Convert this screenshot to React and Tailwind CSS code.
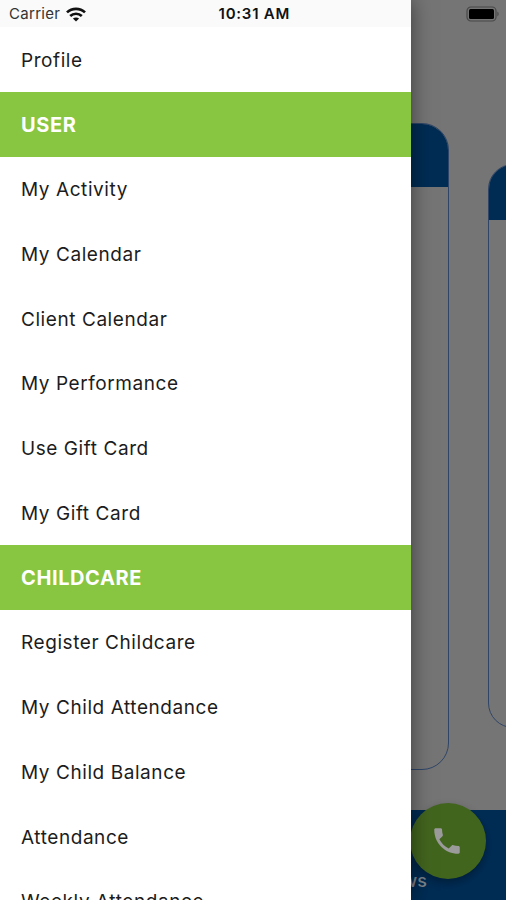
import { MdPhone } from "react-icons/md";

const menuItems = [
  { title: "Profile" },
  { title: "USER", header: true },
  { title: "My Activity" },
  { title: "My Calendar" },
  { title: "Client Calendar" },
  { title: "My Performance" },
  { title: "Use Gift Card" },
  { title: "My Gift Card" },
  { title: "CHILDCARE", header: true },
  { title: "Register Childcare" },
  { title: "My Child Attendance" },
  { title: "My Child Balance" },
  { title: "Attendance" },
  { title: "Weekly Attendance" },
];

function WifiIcon() {
  return (
    <svg width="20" height="15" viewBox="0 0 20 15" fill="none" stroke="#111" strokeWidth="2.7">
      <path d="M1 5.4C6 .6 14 .6 19 5.4" />
      <path d="M4.2 9c3.3-3 8.3-3 11.6 0" />
      <path d="M10 14.4 6.9 11.6c1.8-1.5 4.4-1.5 6.2 0z" fill="#111" stroke="none" />
    </svg>
  );
}

function BatteryIcon() {
  return (
    <svg width="34" height="16" viewBox="0 0 34 16">
      <rect x="1" y="1" width="29" height="14" rx="4" fill="none" stroke="#484848" strokeWidth="1.2" />
      <rect x="3" y="3" width="25" height="10" rx="1.5" fill="#000" />
      <path d="M31.4 5.6c1.7.8 1.7 4 0 4.8z" fill="#484848" />
    </svg>
  );
}

function Drawer() {
  return (
    <aside className="absolute inset-y-0 left-0 w-[411px] overflow-hidden bg-white shadow-[0_0_20px_rgba(0,0,0,0.5)]">
      <div className="flex h-[27.4px] items-center bg-[#fafafa] pl-[9px] pt-[2px]">
        <span className="mr-[6px] text-[15px] tracking-[0.3px] text-[#333]">Carrier</span>
        <WifiIcon />
        <span className="ml-auto mr-[121px] text-[15px] font-semibold tracking-[0.75px] text-[#111]">
          10:31 AM
        </span>
      </div>
      <nav>
        {menuItems.map((item) => (
          <div
            key={item.title}
            className={
              item.header
                ? "flex h-[64.75px] items-center bg-[#88c540] pl-[21px] pt-px text-[20px] font-bold tracking-[0.6px] text-white"
                : "flex h-[64.75px] items-center pl-[21px] pt-[2px] text-[19px] tracking-[0.57px] text-[#1c1c1c]"
            }
          >
            {item.title}
          </div>
        ))}
      </nav>
    </aside>
  );
}

export default function App() {
  return (
    <div className="relative flex h-[900px] w-[506px] flex-col overflow-hidden bg-[#757575] font-['Inter',sans-serif]">
      <div className="flex h-[28px] shrink-0 justify-end pr-[6px] pt-[6px]">
        <BatteryIcon />
      </div>

      {/* card carousel, dimmed by the open drawer */}
      <div className="flex w-[900px] flex-1 items-start pt-[95px]">
        <div className="h-[647px] w-[449px] shrink-0 overflow-hidden rounded-[27px] border border-[#2f4568]">
          <div className="h-[63px] bg-[#002c54]" />
        </div>
        <div className="ml-[39px] mt-[41px] h-[564px] w-[400px] shrink-0 overflow-hidden rounded-[25px] border border-[#2f4568]">
          <div className="h-[55px] bg-[#002c54]" />
        </div>
      </div>

      <div className="flex h-[90px] shrink-0 items-end bg-[#002c54] pb-[8px]">
        <span className="w-[427px] text-right text-[18px] font-medium leading-[22px] text-[#80868c]">News</span>
      </div>

      <button className="absolute left-[410px] top-[803px] flex size-[76px] items-center justify-center rounded-full bg-[#42651e] pr-[2px] shadow-[0_4px_8px_rgba(0,0,0,0.3)]">
        <MdPhone className="size-[34px] text-[#9b9b9b]" />
      </button>

      <Drawer />
    </div>
  );
}
